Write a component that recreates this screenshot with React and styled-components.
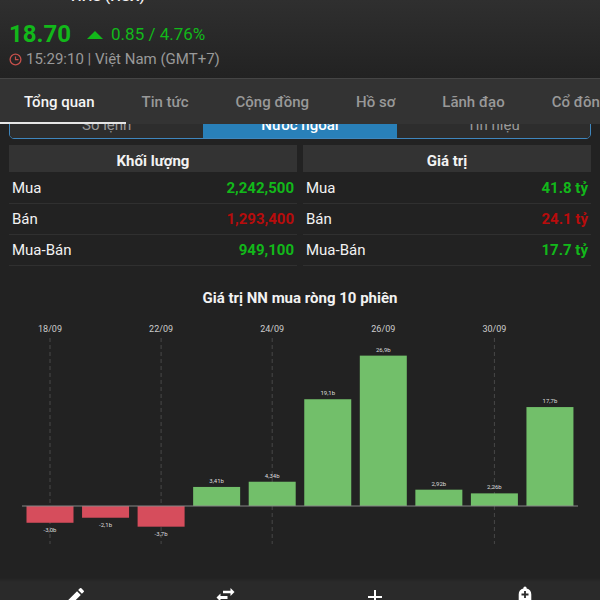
import styled, { createGlobalStyle } from "styled-components";
import { MdAdd, MdEdit } from "react-icons/md";

const tabs = ["Tổng quan", "Tin tức", "Cộng đồng", "Hồ sơ", "Lãnh đạo", "Cổ đông"];

const segments = ["Sổ lệnh", "Nước ngoài", "Tín hiệu"];

const tables = [
  {
    title: "Khối lượng",
    rows: [
      { label: "Mua", value: "2,242,500" },
      { label: "Bán", value: "1,293,400", down: true },
      { label: "Mua-Bán", value: "949,100" },
    ],
  },
  {
    title: "Giá trị",
    rows: [
      { label: "Mua", value: "41.8 tỷ" },
      { label: "Bán", value: "24.1 tỷ", down: true },
      { label: "Mua-Bán", value: "17.7 tỷ" },
    ],
  },
];

const sessions = [
  { date: "18/09", grid: true, value: -3.0, label: "-3,0b" },
  { value: -2.1, label: "-2,1b" },
  { date: "22/09", grid: true, value: -3.7, label: "-3,7b" },
  { value: 3.41, label: "3,41b" },
  { date: "24/09", grid: true, value: 4.34, label: "4,34b" },
  { value: 19.1, label: "19,1b" },
  { date: "26/09", value: 26.9, label: "26,9b" },
  { value: 2.92, label: "2,92b" },
  { date: "30/09", grid: true, value: 2.26, label: "2,26b" },
  { value: 17.7, label: "17,7b" },
];

const ZERO_Y = 187;
const STEP = 55.55;
const SCALE = 5.59;

const NetChart = () => (
  <Chart viewBox="0 0 600 230" role="img" aria-label="Giá trị NN mua ròng 10 phiên">
    {sessions.map(({ date, grid, value, label }, i) => {
      const x = 50 + i * STEP;
      const height = Math.abs(value) * SCALE;
      const up = value > 0;
      return (
        <g key={label}>
          {grid && <GridLine x1={x} x2={x} y1="19" y2="225" />}
          {date && (
            <DateLabel x={x} y="13">
              {date}
            </DateLabel>
          )}
          <Bar
            x={x - 23.5}
            y={up ? ZERO_Y - height : ZERO_Y}
            width="47"
            height={height}
            $up={up}
          />
          <BarLabel x={x} y={up ? ZERO_Y - height - 4 : ZERO_Y + height + 9}>
            {label}
          </BarLabel>
        </g>
      );
    })}
    <Axis x1="22" x2="578" y1={ZERO_Y} y2={ZERO_Y} />
  </Chart>
);

const ClockIcon = () => (
  <svg width="13" height="13" viewBox="0 0 13 13" fill="none" stroke="#c4504b" aria-hidden="true">
    <circle cx="6.5" cy="6.5" r="5.4" strokeWidth="1.3" />
    <path d="M6.5 3.5v3.2h3" strokeWidth="1.2" />
  </svg>
);

const SwapIcon = () => (
  <svg width="22" height="22" viewBox="0 0 22 22" fill="currentColor" aria-hidden="true">
    <path d="M9 5.700h7.500V3l4 4-4 4V8.300H9z" />
    <path d="M13.500 11H6.500V8.500L2.500 12.500l4 4V14h7z" />
  </svg>
);

const AlertIcon = () => (
  <svg width="22" height="22" viewBox="0 0 22 22" aria-hidden="true">
    <path
      d="M11 1.500a2 2 0 0 1 1.700 2C15.600 4 17.300 6.300 17.300 9.400V16l2 2.500H2.700l2-2.500V9.400c0-3.100 1.700-5.400 4.600-5.900A2 2 0 0 1 11 1.500z"
      fill="currentColor"
    />
    <path d="M11 6v7M7.500 9.500h7" stroke="#2a2a2a" strokeWidth="1.800" />
  </svg>
);

const App = () => {
  return (
    <Screen>
      <GlobalStyle />
      <Header>
        <Ticker>HHS (HSX)</Ticker>
        <Quote>
          <Price>18.70</Price>
          <UpArrow />
          <Change>0.85 / 4.76%</Change>
        </Quote>
        <Updated>
          <ClockIcon />
          15:29:10 | Việt Nam (GMT+7)
        </Updated>
      </Header>
      <Tabs>
        {tabs.map((tab, i) => (
          <Tab key={tab} href="#" $active={i === 0}>
            {tab}
          </Tab>
        ))}
      </Tabs>
      <Content>
        <SegmentClip>
          <Segments>
            {segments.map((segment, i) => (
              <Segment key={segment} type="button" $active={i === 1}>
                {segment}
              </Segment>
            ))}
          </Segments>
        </SegmentClip>
        <Tables>
          {tables.map(({ title, rows }) => (
            <Table key={title}>
              <thead>
                <tr>
                  <TableTitle colSpan={2}>{title}</TableTitle>
                </tr>
              </thead>
              <tbody>
                {rows.map(({ label, value, down }) => (
                  <Row key={label}>
                    <RowLabel scope="row">{label}</RowLabel>
                    <RowValue $down={down}>{value}</RowValue>
                  </Row>
                ))}
              </tbody>
            </Table>
          ))}
        </Tables>
        <ChartTitle>Giá trị NN mua ròng 10 phiên</ChartTitle>
      </Content>
      <NetChart />
      <Toolbar>
        <Tool type="button" aria-label="Ghi chú">
          <MdEdit size={24} />
        </Tool>
        <Tool type="button" aria-label="Giao dịch">
          <SwapIcon />
        </Tool>
        <Tool type="button" aria-label="Thêm">
          <MdAdd size={24} />
        </Tool>
        <Tool type="button" aria-label="Cảnh báo">
          <AlertIcon />
        </Tool>
      </Toolbar>
    </Screen>
  );
};

const GlobalStyle = createGlobalStyle`
  * {
    box-sizing: border-box;
  }

  body {
    margin: 0;
    background-color: #222222;
    color: #f2f2f2;
    font-family: Roboto, "Noto Sans", sans-serif;
  }
`;

const Screen = styled.div`
  display: flex;
  flex-direction: column;
  height: 100vh;
  overflow: hidden;
`;

const Header = styled.header`
  display: flex;
  flex-direction: column;
  justify-content: flex-end;
  flex-shrink: 0;
  height: 78px;
  padding: 0 9px 8px;
  overflow: hidden;
  background: linear-gradient(#2f2f2f, #222222);
`;

const Ticker = styled.h1`
  margin: 0 0 15px;
  padding-left: 62px;
  font-size: 15px;
  font-weight: 500;
  line-height: 18px;
`;

const Quote = styled.div`
  display: flex;
  align-items: center;
  height: 28px;
  color: #12b81a;
`;

const Price = styled.strong`
  font-size: 24px;
  font-weight: 700;
`;

const UpArrow = styled.span`
  margin: 2px 8px 0 16px;
  border: 8px solid transparent;
  border-top: 0;
  border-bottom: 8px solid #12b81a;
`;

const Change = styled.span`
  font-size: 17px;
`;

const Updated = styled.div`
  display: flex;
  align-items: center;
  gap: 4px;
  color: #999999;
  font-size: 15px;
  line-height: 22px;
`;

const Tabs = styled.nav`
  display: flex;
  flex-shrink: 0;
  height: 46px;
  overflow: hidden;
  background-color: #333333;
  border-top: 1px solid #454545;
`;

const Tab = styled.a`
  display: flex;
  align-items: center;
  flex-shrink: 0;
  padding: 2px 32px 0 15px;
  border-bottom: 2px solid ${({ $active }) => ($active ? "#e6e6e6" : "transparent")};
  color: ${({ $active }) => ($active ? "#f5f5f5" : "#999999")};
  font-size: 15px;
  font-weight: 500;
  text-decoration: none;
  white-space: nowrap;

  &:first-child {
    padding-left: 24px;
  }
`;

const Content = styled.main`
  flex-shrink: 0;
  padding: 0 9px;
`;

const SegmentClip = styled.div`
  display: flex;
  align-items: flex-end;
  height: 15px;
  overflow: hidden;
`;

const Segments = styled.div`
  display: flex;
  flex: 1;
  height: 30px;
  overflow: hidden;
  border: 1px solid #3f86bd;
  border-radius: 5px;
`;

const Segment = styled.button`
  flex: 1;
  padding: 2px 0 0;
  border: 0;
  background-color: ${({ $active }) => ($active ? "#2980b9" : "#2d2d2d")};
  color: ${({ $active }) => ($active ? "#ffffff" : "#999999")};
  font-family: inherit;
  font-size: 15px;
  font-weight: ${({ $active }) => ($active ? 500 : 400)};
  cursor: pointer;
`;

const Tables = styled.div`
  display: grid;
  grid-template-columns: 1fr 1fr;
  gap: 6px;
  margin-top: 6px;
`;

const Table = styled.table`
  width: 100%;
  border-collapse: collapse;
  font-size: 15px;
`;

const TableTitle = styled.th`
  height: 27px;
  padding: 4px 0 0;
  background-color: #333333;
  font-size: 15px;
  font-weight: 700;
  line-height: 20px;
`;

const Row = styled.tr`
  height: 31px;
  border-bottom: 1px solid #303030;
`;

const RowLabel = styled.th`
  padding: 1px 3px 0;
  font-weight: 400;
  text-align: left;
`;

const RowValue = styled.td`
  padding: 1px 3px 0;
  color: ${({ $down }) => ($down ? "#b80c0c" : "#12b81a")};
  font-weight: 700;
  text-align: right;
`;

const ChartTitle = styled.h2`
  margin: 22px 0 11px;
  font-size: 15px;
  font-weight: 700;
  line-height: 20px;
  text-align: center;
`;

const Chart = styled.svg`
  display: block;
  flex-shrink: 0;
  width: 100%;
`;

const GridLine = styled.line`
  stroke: #484848;
  stroke-dasharray: 4 3;
`;

const Axis = styled.line`
  stroke: #858585;
`;

const Bar = styled.rect`
  fill: ${({ $up }) => ($up ? "#72bf6a" : "#d64d5c")};
`;

const DateLabel = styled.text`
  fill: #cccccc;
  font-size: 9px;
  text-anchor: middle;
`;

const BarLabel = styled.text`
  fill: #dddddd;
  font-size: 6px;
  text-anchor: middle;
`;

const Toolbar = styled.footer`
  display: grid;
  grid-template-columns: repeat(4, 1fr);
  flex-shrink: 0;
  height: 22px;
  margin-top: auto;
  overflow: hidden;
  background: linear-gradient(#222222, #2a2a2a 4px);
`;

const Tool = styled.button`
  display: flex;
  justify-content: center;
  height: 40px;
  padding: 7px 0 0;
  border: 0;
  background: none;
  color: #ffffff;
  cursor: pointer;
`;

export default App;
